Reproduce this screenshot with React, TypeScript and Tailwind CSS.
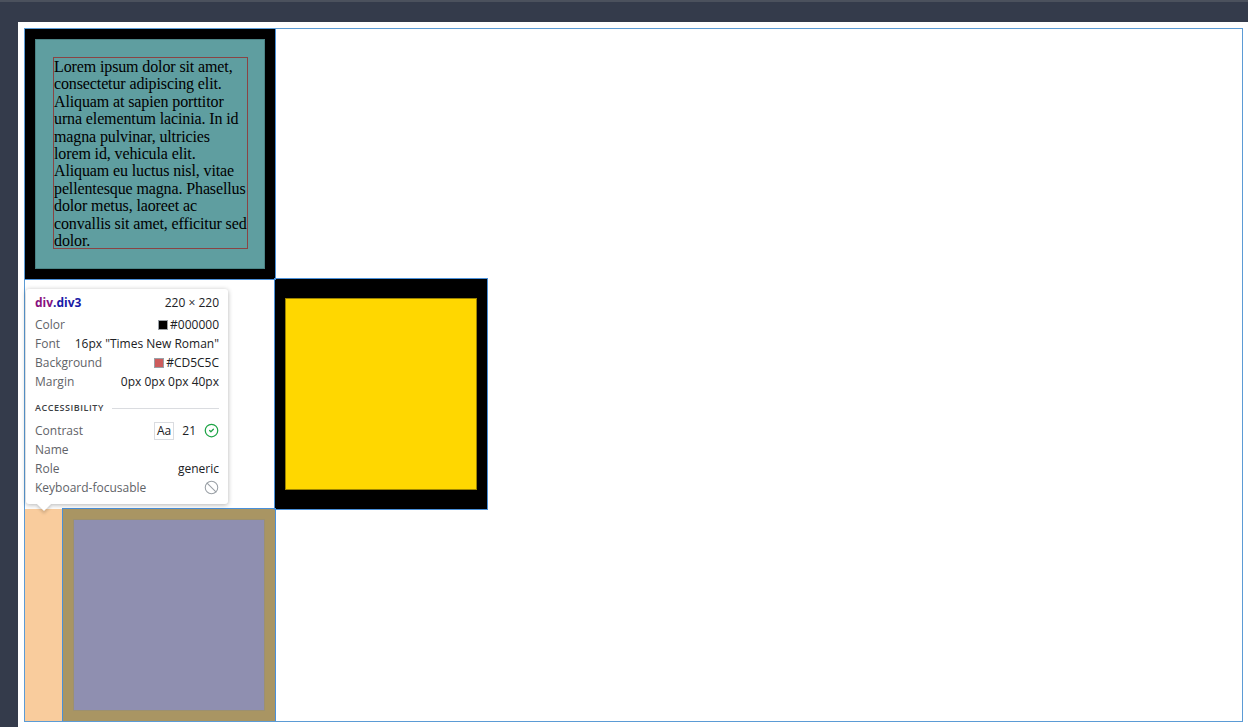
import { Ban, CircleCheck } from "lucide-react";

const loremLines = [
  "Lorem ipsum dolor sit amet,",
  "consectetur adipiscing elit.",
  "Aliquam at sapien porttitor",
  "urna elementum lacinia. In id",
  "magna pulvinar, ultricies",
  "lorem id, vehicula elit.",
  "Aliquam eu luctus nisl, vitae",
  "pellentesque magna. Phasellus",
  "dolor metus, laoreet ac",
  "convallis sit amet, efficitur sed",
  "dolor.",
];

function Row({ label, children }: { label: string; children?: React.ReactNode }) {
  return (
    <div className="flex h-[19px] items-center justify-between">
      <span className="text-[#5f6368]">{label}</span>
      <span className="flex items-center text-[#202124]">{children}</span>
    </div>
  );
}

function Swatch({ color }: { color: string }) {
  return <span className="mr-[2px] inline-block h-[10px] w-[10px] border border-[#9aa0a6]" style={{ background: color }} />;
}

function Tooltip() {
  return (
    <div className="absolute left-[26px] top-[287px] w-[202px] rounded-[3px] bg-white px-[9px] pb-[7px] pt-[4px] text-[12px] shadow-[0_1px_5px_rgba(0,0,0,0.3)] font-['Open_Sans','Noto_Sans',sans-serif]">
      <div className="mb-[3px] flex h-[19px] items-center justify-between">
        <span className="font-bold">
          <span className="text-[#881280]">div</span>
          <span className="text-[#1a1aa6]">.div3</span>
        </span>
        <span className="text-[#202124]">220 × 220</span>
      </div>
      <Row label="Color">
        <Swatch color="#000000" />
        #000000
      </Row>
      <Row label="Font">16px "Times New Roman"</Row>
      <Row label="Background">
        <Swatch color="#CD5C5C" />
        #CD5C5C
      </Row>
      <Row label="Margin">0px 0px 0px 40px</Row>
      <div className="mb-[4px] mt-[8px] flex h-[18px] items-center gap-2">
        <span className="text-[9px] font-semibold tracking-[0.06em] text-[#3c4043]">ACCESSIBILITY</span>
        <span className="h-px flex-1 bg-[#dadce0]" />
      </div>
      <Row label="Contrast">
        <span className="mr-[8px] flex h-[18px] items-center border border-[#dadce0] px-[2px] text-[#202124]">Aa</span>
        <span className="mr-[8px]">21</span>
        <CircleCheck size={15} strokeWidth={2} className="text-[#1ea446]" />
      </Row>
      <Row label="Name" />
      <Row label="Role">generic</Row>
      <Row label="Keyboard-focusable">
        <Ban size={15} strokeWidth={1.7} className="text-[#9aa0a6]" />
      </Row>
      <div className="absolute bottom-[-5px] left-[13px] h-[10px] w-[10px] rotate-45 bg-white shadow-[2px_2px_3px_rgba(0,0,0,0.15)]" />
    </div>
  );
}

export default function App() {
  return (
    <div className="relative h-[727px] w-[1248px] overflow-hidden border-t-2 border-[#4b515d] bg-[#343b4b] pl-[18px] pt-[20px]">
      <div className="h-full bg-white pl-[7px] pt-[7px]">
        <div className="w-[1217px] outline outline-1 outline-[#5b9bd5]">
          {/* div1 */}
          <div className="h-[250px] w-[250px] border-[10px] border-black outline outline-1 outline-[#4a90d9]">
            <div className="h-full w-full border border-[#4b8486] bg-[#5f9ea0] pl-[17px] pt-[17px]">
              <div className="h-[192px] w-[195px] border border-[#8a4444] font-['Liberation_Serif','Times_New_Roman',serif] text-[16px] leading-[17.4px] tracking-[-0.12px] text-black">
                {loremLines.map((l) => (
                  <div key={l} className="whitespace-nowrap">
                    {l}
                  </div>
                ))}
              </div>
            </div>
          </div>
          {/* div2 */}
          <div className="ml-[250px] h-[230px] w-[212px] bg-black px-[10px] pt-[19px] outline outline-1 outline-[#4a90d9]">
            <div className="h-[192px] w-[192px] border border-[#9c8300] bg-[#ffd700]" />
          </div>
          {/* div3 highlighted */}
          <div className="flex h-[212px]">
            <div className="w-[38px] bg-[#f9cc9d]" />
            <div className="h-[212px] w-[212px] bg-[#a99563] p-[10px] outline outline-1 outline-[#4a90d9]">
              <div className="h-full w-full border border-[#9c9070] bg-[#8f8fb0]" />
            </div>
          </div>
        </div>
      </div>
      <Tooltip />
    </div>
  );
}
